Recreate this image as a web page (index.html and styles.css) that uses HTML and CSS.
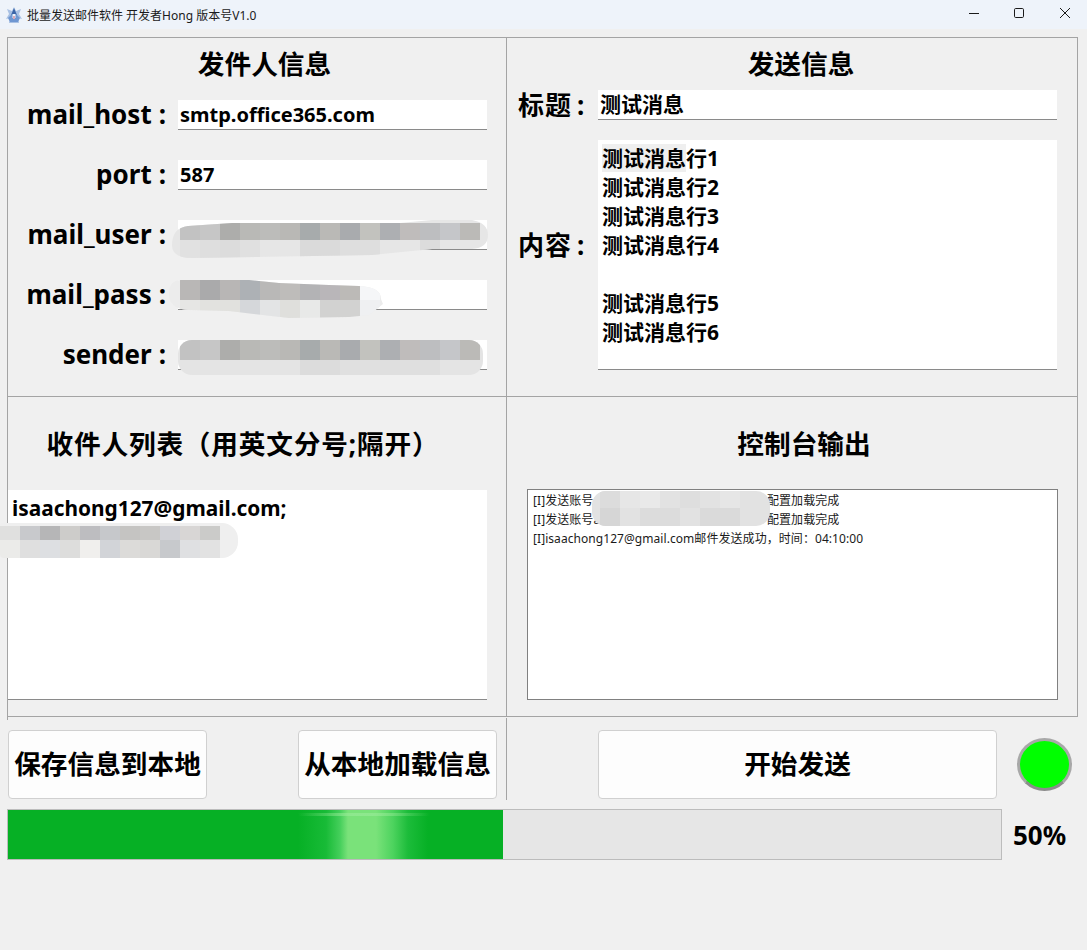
FILE: index.html
```html
<!DOCTYPE html>
<html lang="zh-CN">
<head>
<meta charset="utf-8">
<title>批量发送邮件软件</title>
<link rel="stylesheet" href="styles.css">
</head>
<body>
<header class="titlebar">
  <div class="title-left">
    <svg class="app-icon" viewBox="0 0 16 16" width="16" height="16"><path d="M8 0 10 4 15 2 13 7 16 12 12 11 13 16H3L4 11 0 12 3 7 1 2 6 4Z" fill="#a9c1e4"/><path d="M8 1 11 8H5Z" fill="#3c66a8"/><path d="M2 11 6 7 8 10 10 7 14 11 12 15H4Z" fill="#6f97d2"/><path d="M6.5 7h3v4h-3z" fill="#eef2fa"/><path d="M7 9h2v3H7z" fill="#d9a9b8"/></svg>
    <span>批量发送邮件软件 开发者Hong 版本号V1.0</span>
  </div>
  <div class="win-controls">
    <svg class="win-min" viewBox="0 0 10 10" width="10" height="10"><path d="M0 5.5H10" stroke="#1a1a1a" fill="none"/></svg>
    <svg viewBox="0 0 10 10" width="10" height="10"><rect x=".5" y=".5" width="9" height="9" rx="1.2" stroke="#1a1a1a" fill="none"/></svg>
    <svg viewBox="0 0 10 10" width="10" height="10"><path d="M0 0 10 10M10 0 0 10" stroke="#1a1a1a" fill="none"/></svg>
  </div>
</header>

<main class="panel">
  <section class="cell cell-sender">
    <h2 class="heading">发件人信息</h2>
    <div class="form">
      <label class="label">mail_host<span class="colon">:</span></label><div class="field">smtp.office365.com</div>
      <label class="label">port<span class="colon">:</span></label><div class="field">587</div>
      <label class="label">mail_user<span class="colon">:</span></label><div class="field"></div>
      <label class="label">mail_pass<span class="colon">:</span></label><div class="field"></div>
      <label class="label">sender<span class="colon">:</span></label><div class="field"></div>
    </div>
  </section>
  <section class="cell cell-message">
    <h2 class="heading">发送信息</h2>
    <div class="msg-form">
      <label class="label">标题<span class="colon">:</span></label><div class="field field-wide">测试消息</div>
      <label class="label label-up">内容<span class="colon">:</span></label>
      <div class="field field-wide area"><span class="selected">测试消息</span>行1
测试消息行2
测试消息行3
测试消息行4

测试消息行5
测试消息行6</div>
    </div>
  </section>
  <section class="cell cell-recipients">
    <h2 class="heading">收件人列表（用英文分号;隔开）</h2>
    <div class="recipients">isaachong127@gmail.com;</div>
  </section>
  <section class="cell cell-console">
    <h2 class="heading">控制台输出</h2>
    <div class="console">
      <div><span class="prefix">[I]发送账号a</span>配置加载完成</div>
      <div><span class="prefix">[I]发送账号a</span>配置加载完成</div>
      <div>[I]isaachong127@gmail.com邮件发送成功，时间：04:10:00</div>
    </div>
  </section>

  <svg class="blur blur-user" viewBox="0 0 316 38"><rect width="316" height="38" fill="#e6e6e6"/>
    <g transform="translate(8 3)"><rect width="20" height="17" fill="#c2c2c2"/><rect x="20" width="20" height="17" fill="#c6c6c6"/><rect x="40" width="20" height="17" fill="#adadab"/><rect x="60" width="20" height="17" fill="#b9b9b6"/><rect x="80" width="20" height="17" fill="#bcbcba"/><rect x="100" width="20" height="17" fill="#b9b8b5"/><rect x="120" width="20" height="17" fill="#a7abac"/><rect x="140" width="20" height="17" fill="#bab9b6"/><rect x="160" width="20" height="17" fill="#a9abae"/><rect x="180" width="20" height="17" fill="#c2c2be"/><rect x="200" width="20" height="17" fill="#adafb2"/><rect x="220" width="20" height="17" fill="#bfbcbb"/><rect x="240" width="20" height="17" fill="#bdbec0"/><rect x="260" width="20" height="17" fill="#c5c6c9"/><rect x="280" width="20" height="17" fill="#bbbab7"/>
    <rect y="17" width="20" height="18" fill="#e1e1e1"/><rect x="20" y="17" width="20" height="18" fill="#dedede"/><rect x="40" y="17" width="20" height="18" fill="#dcdcdc"/><rect x="60" y="17" width="20" height="18" fill="#e0e0e0"/><rect x="120" y="17" width="40" height="18" fill="#dadada"/><rect x="160" y="17" width="40" height="18" fill="#dedede"/><rect x="240" y="17" width="20" height="18" fill="#dcdcdc"/></g>
  </svg>
  <svg class="blur blur-pass" viewBox="0 0 214 39"><rect width="214" height="39" fill="#ececec"/>
    <g transform="translate(11 1)"><rect width="20" height="20" fill="#b9b7b6"/><rect x="20" width="20" height="20" fill="#aaaaab"/><rect x="40" width="20" height="20" fill="#b8b6b5"/><rect x="60" width="20" height="20" fill="#adb1b5"/><rect x="80" width="20" height="20" fill="#b9b8b7"/><rect x="100" width="20" height="20" fill="#bebcba"/><rect x="120" width="20" height="20" fill="#b3b3b5"/><rect x="140" width="20" height="20" fill="#b9b6b9"/><rect x="160" width="20" height="20" fill="#bcbab7"/><rect x="180" width="20" height="20" fill="#f5f6f8"/>
    <rect y="20" width="20" height="18" fill="#e6e6e4"/><rect x="20" y="20" width="20" height="18" fill="#e2e2df"/><rect x="40" y="20" width="20" height="18" fill="#e1e1de"/><rect x="60" y="20" width="20" height="18" fill="#d5d7da"/><rect x="80" y="20" width="20" height="18" fill="#e3e4e5"/><rect x="100" y="20" width="20" height="18" fill="#dfdfdc"/><rect x="120" y="20" width="20" height="18" fill="#e8e9e8"/><rect x="140" y="20" width="40" height="18" fill="#d2d2d1"/><rect x="180" y="20" width="20" height="18" fill="#eff0f2"/></g>
  </svg>
  <svg class="blur blur-sender" viewBox="0 0 305 35"><rect width="305" height="35" fill="#e4e4e4"/>
    <g transform="translate(2 0)"><rect width="20" height="20" fill="#c2c2c2"/><rect x="20" width="20" height="20" fill="#c6c6c6"/><rect x="40" width="20" height="20" fill="#adadab"/><rect x="60" width="20" height="20" fill="#b9b9b6"/><rect x="80" width="20" height="20" fill="#bcbcba"/><rect x="100" width="20" height="20" fill="#b9b8b5"/><rect x="120" width="20" height="20" fill="#a7abac"/><rect x="140" width="20" height="20" fill="#bab9b6"/><rect x="160" width="20" height="20" fill="#a9abae"/><rect x="180" width="20" height="20" fill="#c2c2be"/><rect x="200" width="20" height="20" fill="#adafb2"/><rect x="220" width="20" height="20" fill="#bfbcbb"/><rect x="240" width="20" height="20" fill="#bdbec0"/><rect x="260" width="20" height="20" fill="#c5c6c9"/><rect x="280" width="20" height="20" fill="#bbbab7"/>
    <rect x="120" y="20" width="40" height="15" fill="#dcdcdc"/><rect x="160" y="20" width="40" height="15" fill="#e0e0e0"/><rect x="200" y="20" width="60" height="15" fill="#dfdfdf"/></g>
  </svg>
  <svg class="blur blur-rcpt" viewBox="0 0 238 35"><rect width="238" height="35" fill="#efefef"/>
    <g transform="translate(0 3)"><rect width="20" height="14" fill="#e0e0df"/><rect x="20" width="20" height="14" fill="#c8c9cc"/><rect x="40" width="20" height="14" fill="#b6b6b7"/><rect x="60" width="20" height="14" fill="#cdccca"/><rect x="80" width="20" height="14" fill="#bdbdc0"/><rect x="100" width="20" height="14" fill="#c6c8cb"/><rect x="120" width="20" height="14" fill="#c5c4c2"/><rect x="140" width="20" height="14" fill="#c8c7c5"/><rect x="160" width="20" height="14" fill="#d0d1d6"/><rect x="180" width="20" height="14" fill="#d8d6d5"/><rect x="200" width="20" height="14" fill="#cbcbc9"/>
    <rect y="14" width="20" height="18" fill="#ebebe9"/><rect x="20" y="14" width="20" height="18" fill="#dfdfdf"/><rect x="40" y="14" width="20" height="18" fill="#dddfe2"/><rect x="60" y="14" width="20" height="18" fill="#dddddc"/><rect x="80" y="14" width="20" height="18" fill="#f0efed"/><rect x="100" y="14" width="20" height="18" fill="#d2d4d8"/><rect x="120" y="14" width="20" height="18" fill="#dcdbd9"/><rect x="140" y="14" width="20" height="18" fill="#d9d8d6"/><rect x="160" y="14" width="20" height="18" fill="#c7c9cc"/><rect x="180" y="14" width="20" height="18" fill="#dfe0e2"/><rect x="200" y="14" width="20" height="18" fill="#e2e2e2"/></g>
  </svg>
  <svg class="blur blur-console" viewBox="0 0 178 35"><rect width="178" height="35" fill="#e2e2e2"/>
    <rect x="8" width="20" height="17" fill="#dcdcdc"/><rect x="28" width="20" height="17" fill="#e6e6e6"/><rect x="48" width="20" height="17" fill="#e9e9e9"/><rect x="88" width="20" height="17" fill="#dedede"/><rect x="128" width="20" height="17" fill="#e6e6e6"/>
    <rect x="8" y="17" width="20" height="18" fill="#d6d6d6"/><rect x="48" y="17" width="40" height="18" fill="#dcdcdc"/><rect x="108" y="17" width="40" height="18" fill="#dadada"/>
  </svg>
</main>

<div class="actions">
  <div class="actions-left">
    <button class="btn btn-small">保存信息到本地</button>
    <button class="btn btn-small">从本地加载信息</button>
  </div>
  <div class="actions-right">
    <button class="btn btn-send">开始发送</button>
    <div class="led"></div>
  </div>
</div>

<div class="progress-row">
  <div class="progress"><div class="progress-fill"></div></div>
  <span class="progress-text">50%</span>
</div>
</body>
</html>
```
FILE: styles.css
```css
* { box-sizing: border-box; }
html, body { margin: 0; padding: 0; }
body {
  width: 1087px;
  height: 950px;
  overflow: hidden;
  background: #f0f0f0;
  color: #000;
  font-family: "Noto Sans", "Noto Sans CJK SC", sans-serif;
}
.titlebar {
  height: 29px;
  background: #eef3fa;
  display: flex;
  justify-content: space-between;
  align-items: center;
  font-size: 12px;
  color: #1a1a1a;
}
.title-left { display: flex; align-items: center; gap: 5px; padding-left: 6px; }
.win-controls { display: flex; gap: 36px; padding-right: 17px; padding-bottom: 3px; }
.win-min { margin-right: -1px; }

.panel {
  position: relative;
  margin: 8px 0 0 7px;
  width: 1071px;
  height: 680px;
  border: 1px solid #a4a4a4;
  display: grid;
  grid-template-columns: 499px 1fr;
  grid-template-rows: 359px 1fr;
}
.panel::after {
  content: "";
  position: absolute;
  left: -1px;
  top: 679px;
  width: 1px;
  height: 3px;
  background: #a4a4a4;
}
.cell { padding-top: 6px; min-width: 0; }
.cell-sender, .cell-recipients { border-right: 1px solid #a4a4a4; }
.cell-sender, .cell-message { border-bottom: 1px solid #a4a4a4; }
.heading {
  margin: 0;
  height: 40px;
  line-height: 40px;
  font-size: 26.67px;
  font-weight: 700;
  text-align: center;
  white-space: nowrap;
}
.cell-sender .heading { padding-left: 15px; }
.cell-message .heading { padding-left: 18px; }
.cell-recipients .heading { padding-right: 28px; padding-top: 21px; height: 62px; letter-spacing: .8px; }
.cell-console .heading { padding-left: 24px; padding-top: 21px; height: 62px; }

.form {
  margin-top: 16px;
  display: grid;
  grid-template-columns: 159px 309px;
  grid-auto-rows: 30px;
  column-gap: 11px;
  row-gap: 30px;
}
.label {
  font-size: 26px;
  font-weight: 700;
  line-height: 28px;
  text-align: right;
  white-space: nowrap;
  padding-right: 1px;
}
.colon { margin-left: 7px; }
.field {
  background: #fff;
  border-bottom: 1px solid #8a8a8a;
  font-size: 20px;
  font-weight: 700;
  line-height: 29px;
  padding-left: 2px;
  white-space: nowrap;
}
.msg-form {
  margin-top: 6px;
  padding-left: 11px;
  display: grid;
  grid-template-columns: 66px 459px;
  grid-template-rows: 30px 230px;
  column-gap: 14px;
  row-gap: 20px;
  align-items: center;
}
.msg-form .label { text-align: left; font-size: 26px; letter-spacing: 1px; }
.msg-form .colon { margin-left: 5px; }
.label-up { margin-bottom: 20px; }
.field-wide { height: 30px; font-size: 21px; }
.area {
  height: 230px;
  white-space: pre;
  padding: 4px 0 0 4px;
  line-height: 29px;
}
.selected { background: #efefef; }
.recipients {
  margin-top: 25px;
  height: 210px;
  background: #fff;
  border-bottom: 1px solid #8a8a8a;
  font-size: 20.85px;
  font-weight: 700;
  line-height: 29px;
  padding: 4px 0 0 4px;
  width: 479px;
}
.console {
  margin: 24px 0 0 20px;
  width: 531px;
  height: 211px;
  background: #fff;
  border: 1px solid #808080;
  padding: 1px 0 0 5px;
  font-size: 12px;
  line-height: 19px;
  letter-spacing: .06px;
  color: #1a1a1a;
  white-space: nowrap;
}
.prefix { display: inline-block; width: 234px; }

.blur { position: absolute; display: block; }
.blur-user { left: 164px; top: 182px; width: 316px; height: 38px; clip-path: path("M0 25Q0 8 16 6L60 3H228L260 0H300Q316 3 316 15Q316 28 300 29H260L220 33 200 35 20 38Q0 38 0 25Z"); }
.blur-pass { left: 161px; top: 241px; width: 214px; height: 39px; clip-path: path("M0 15Q0 1 12 1H80L110 4 160 6 190 7Q212 8 212 20L214 25 200 36 180 38 120 39 60 32 20 31Q0 30 0 15Z"); }
.blur-sender { left: 170px; top: 302px; width: 305px; height: 35px; border-radius: 14px; }
.blur-rcpt { left: -8px; top: 485px; width: 238px; height: 35px; border-radius: 4px 16px 16px 4px; }
.blur-console { left: 584px; top: 453px; width: 178px; height: 35px; border-radius: 14px; }

.actions { display: flex; height: 82px; margin-top: 1px; }
.actions-left {
  width: 507px;
  padding: 12px 9px 0 8px;
  display: flex;
  justify-content: space-between;
  align-items: flex-start;
  border-right: 1px solid #a4a4a4;
}
.actions-right {
  flex: 1;
  padding: 12px 0 0 91px;
  display: flex;
  align-items: flex-start;
  gap: 20px;
}
.btn {
  height: 69px;
  background: #fdfdfd;
  border: 1px solid #d0d0d0;
  border-radius: 4px;
  font: 700 26.67px/1 "Noto Sans", "Noto Sans CJK SC", sans-serif;
  color: #000;
  padding: 0;
}
.btn-small { width: 199px; }
.btn-send { width: 399px; }
.led {
  width: 55px;
  height: 53px;
  margin-top: 8px;
  border-radius: 50%;
  border: 3px solid #a8a8a8;
  border-bottom-color: #8c8c8c;
  background: #00ff00;
}

.progress-row { display: flex; align-items: center; margin: 9px 0 0 7px; }
.progress {
  width: 995px;
  height: 51px;
  background: #e6e6e6;
  border: 1px solid #bcbcbc;
}
.progress-fill {
  width: 495px;
  height: 100%;
  background:
    linear-gradient(90deg, transparent 290px, rgba(150,235,150,.7) 345px, rgba(150,235,150,.7) 365px, transparent 422px) 0 3px / 100% 3px no-repeat,
    linear-gradient(90deg, #06b025 290px, #18bb37 318px, #45cf5b 332px, #7ae27a 340px, #7ae27a 368px, #4dd35e 385px, #1cbc3a 400px, #06b025 420px);
}
.progress-text { margin-left: 11px; font-size: 26px; font-weight: 700; line-height: 30px; }
```
